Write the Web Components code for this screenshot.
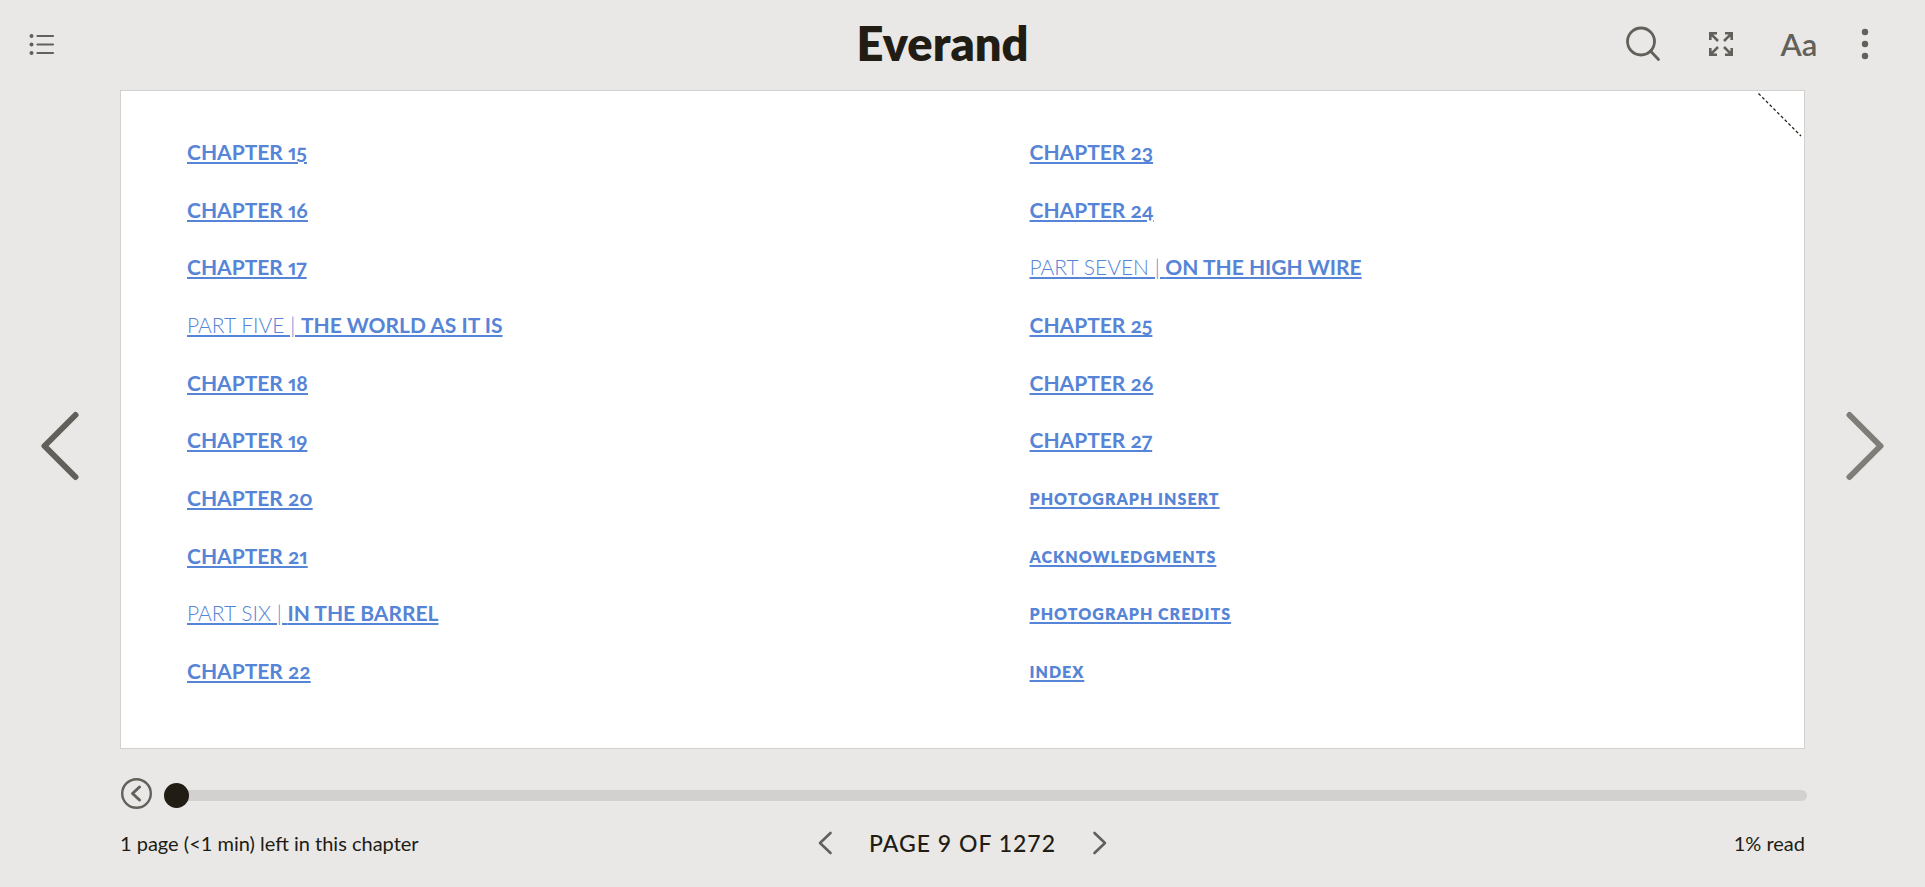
<!DOCTYPE html>
<html lang="en">
<head>
<meta charset="utf-8">
<meta name="viewport" content="width=device-width, initial-scale=1">
<title>Everand</title>
<style>
  html, body { height: 100%; }
  body { margin: 0; background: #e9e8e6; color: #211c14; font-family: Lato, "Open Sans", sans-serif; }
</style>
</head>
<body>
<reader-app></reader-app>

<script>
const define = (name, html) => customElements.define(name, class extends HTMLElement {
  constructor() {
    super();
    this.attachShadow({ mode: 'open' }).innerHTML = html;
  }
});

const button = `
  button { display: flex; align-items: center; justify-content: center; margin: 0; padding: 0; border: 0;
    background: none; color: #62605a; font: inherit; cursor: pointer; }
  svg { display: block; fill: none; stroke: currentColor; stroke-linecap: round; stroke-linejoin: round; }`;

define('reader-header', `
  <style>
    :host { display: grid; grid-template-columns: 1fr auto 1fr; align-items: center; height: 90px; padding: 0 52px 2px 24px; box-sizing: border-box; }
    ${button}
    h1 { margin: 0; padding: 0 12px 2px 0; font-size: 47px; line-height: 60px; font-weight: 800; }
    .tools { display: flex; align-items: center; justify-content: flex-end; }
    .tools button { height: 48px; }
    .search { width: 48px; margin-right: 30px; }
    .full { width: 48px; margin-right: 30px; }
    .type { width: 48px; font-size: 31px; font-weight: 600; margin-right: 34px; }
    .more { width: 16px; }
    .menu { width: 36px; height: 36px; }
  </style>
  <button class="menu" aria-label="Table of contents">
    <svg width="28" height="24" viewBox="0 0 28 24" stroke-width="2.200">
      <path d="M9.500 4H25M9.500 12.500H25M9.500 21H25"/>
      <g fill="currentColor" stroke="none"><circle cx="3.500" cy="4" r="2"/><circle cx="3.500" cy="12.500" r="2"/><circle cx="3.500" cy="21" r="2"/></g>
    </svg>
  </button>
  <h1>Everand</h1>
  <div class="tools">
    <button class="search" aria-label="Search">
      <svg width="36" height="36" viewBox="0 0 36 36" stroke-width="2.800"><circle cx="16" cy="15.500" r="13.500"/><path d="M25.500 25L33.500 33.500"/></svg>
    </button>
    <button class="full" aria-label="Full screen">
      <svg width="26" height="26" viewBox="0 0 26 26" stroke-width="2.600" style="stroke-linejoin:miter;stroke-linecap:butt">
        <path d="M2.300 9V2.300H9M2.600 2.600L10 10M17 2.300H23.700V9M23.400 2.600L16 10M2.300 17V23.700H9M2.600 23.400L10 16M17 23.700H23.700V17M23.400 23.400L16 16"/>
      </svg>
    </button>
    <button class="type" aria-label="Display settings">Aa</button>
    <button class="more" aria-label="More">
      <svg width="8" height="32" viewBox="0 0 8 32"><g fill="currentColor" stroke="none"><circle cx="4" cy="4" r="3.200"/><circle cx="4" cy="16" r="3.200"/><circle cx="4" cy="28" r="3.200"/></g></svg>
    </button>
  </div>`);

class PageTurn extends HTMLElement {
  constructor() {
    super();
    this.attachShadow({ mode: 'open' }).innerHTML = `
      <style>
        :host { display: flex; align-items: center; justify-content: center; padding-top: 53px; }
        ${button}
        :host([dir-to="next"]) button { color: #7f7d77; }
        :host([dir-to="next"]) svg { transform: scaleX(-1); }
      </style>
      <button><svg width="40" height="70" viewBox="0 0 40 70" stroke-width="6"><path d="M35.500 4L4.500 35L35.500 66"/></svg></button>`;
  }
  connectedCallback() {
    this.shadowRoot.querySelector('button').setAttribute('aria-label', `Go to ${this.getAttribute('dir-to')} page`);
  }
}
customElements.define('page-turn', PageTurn);

class ChapterLink extends HTMLElement {
  constructor() {
    super();
    this.attachShadow({ mode: 'open' }).innerHTML = `
      <style>
        :host { display: flex; align-items: center; font-size: 21px; line-height: 26px; font-weight: 700; }
        a { color: #5684d6; text-decoration: underline; text-decoration-thickness: 2px; text-underline-offset: 2px;
          font-variant-numeric: oldstyle-nums proportional-nums; }
        span { font-weight: 300; }
        :host([small]) a { font-size: 16px; font-weight: 800; letter-spacing: 1px; }
        :host([small]) { padding-top: 2px; }
      </style>
      <a href="#"><span></span><slot></slot></a>`;
  }
  connectedCallback() {
    const part = this.getAttribute('part-name');
    if (part) this.shadowRoot.querySelector('span').textContent = part + ' | ';
  }
}
customElements.define('chapter-link', ChapterLink);

define('book-page', `
  <style>
    :host { display: grid; grid-template-columns: 1fr 1fr; column-gap: 2px; position: relative; box-sizing: border-box;
      padding: 32px 0 48px; background: #fff; border: 1px solid #d2d1cf; }
    .column { display: grid; grid-template-rows: repeat(10, 1fr); padding-left: 66px; }
    .corner { position: absolute; top: 1px; right: 1px; }
  </style>
  <div class="column">
    <chapter-link>CHAPTER 15</chapter-link>
    <chapter-link>CHAPTER 16</chapter-link>
    <chapter-link>CHAPTER 17</chapter-link>
    <chapter-link part-name="PART FIVE">THE WORLD AS IT IS</chapter-link>
    <chapter-link>CHAPTER 18</chapter-link>
    <chapter-link>CHAPTER 19</chapter-link>
    <chapter-link>CHAPTER 20</chapter-link>
    <chapter-link>CHAPTER 21</chapter-link>
    <chapter-link part-name="PART SIX">IN THE BARREL</chapter-link>
    <chapter-link>CHAPTER 22</chapter-link>
  </div>
  <div class="column">
    <chapter-link>CHAPTER 23</chapter-link>
    <chapter-link>CHAPTER 24</chapter-link>
    <chapter-link part-name="PART SEVEN">ON THE HIGH WIRE</chapter-link>
    <chapter-link>CHAPTER 25</chapter-link>
    <chapter-link>CHAPTER 26</chapter-link>
    <chapter-link>CHAPTER 27</chapter-link>
    <chapter-link small>PHOTOGRAPH INSERT</chapter-link>
    <chapter-link small>ACKNOWLEDGMENTS</chapter-link>
    <chapter-link small>PHOTOGRAPH CREDITS</chapter-link>
    <chapter-link small>INDEX</chapter-link>
  </div>
  <svg class="corner" width="46" height="46" viewBox="0 0 46 46"><path d="M1.500 1.500L44 44" stroke="#211c14" stroke-width="1.300" stroke-dasharray="3 2.300"/></svg>`);

define('reader-footer', `
  <style>
    :host { display: block; height: 138px; padding: 28px 118px 0 120px; box-sizing: border-box; }
    ${button}
    .scrub { display: flex; align-items: center; }
    .scrub button { width: 33px; height: 33px; margin-right: 11px; }
    input { flex: 1; min-width: 0; height: 25px; margin: 4px 0 0; appearance: none; background: none; }
    input::-webkit-slider-runnable-track { height: 11px; border-radius: 6px; background: #d2d1cf; }
    input::-webkit-slider-thumb { appearance: none; width: 25px; height: 25px; margin-top: -7px; border-radius: 50%; background: #211c14; }
    .status { display: grid; grid-template-columns: 1fr auto 1fr; align-items: center; margin-right: 2px; padding-top: 16px;
      font-size: 20px; line-height: 34px; }
    .status > :last-child { text-align: right; }
    .pager { display: flex; align-items: center; }
    .pager button { width: 16px; height: 34px; }
    .pager .count { font-size: 23px; font-weight: 500; letter-spacing: 1px; margin: 0 36px; }
    .next { transform: scaleX(-1); }
  </style>
  <div class="scrub">
    <button aria-label="Back"><svg width="33" height="33" viewBox="0 0 33 33" stroke-width="2.400"><circle cx="16.500" cy="16.500" r="14.300"/><path stroke-width="3" d="M19.500 10L12.500 16.500L19.500 23"/></svg></button>
    <input type="range" min="0" max="100" value="0" aria-label="Position in book">
  </div>
  <div class="status">
    <span>1 page (&lt;1 min) left in this chapter</span>
    <div class="pager">
      <button aria-label="Previous page"><svg width="16" height="26" viewBox="0 0 16 26" stroke-width="2.600"><path d="M13.500 3L3 13L13.500 23"/></svg></button>
      <span class="count">PAGE 9 OF 1272</span>
      <button aria-label="Next page"><svg class="next" width="16" height="26" viewBox="0 0 16 26" stroke-width="2.600"><path d="M13.500 3L3 13L13.500 23"/></svg></button>
    </div>
    <span>1% read</span>
  </div>`);

define('reader-app', `
  <style>
    :host { display: flex; flex-direction: column; min-height: 100vh; }
    main { flex: 1; display: grid; grid-template-columns: 120px 1fr 120px; }
  </style>
  <reader-header></reader-header>
  <main>
    <page-turn dir-to="previous"></page-turn>
    <book-page></book-page>
    <page-turn dir-to="next"></page-turn>
  </main>
  <reader-footer></reader-footer>`);
</script>
</body>
</html>
